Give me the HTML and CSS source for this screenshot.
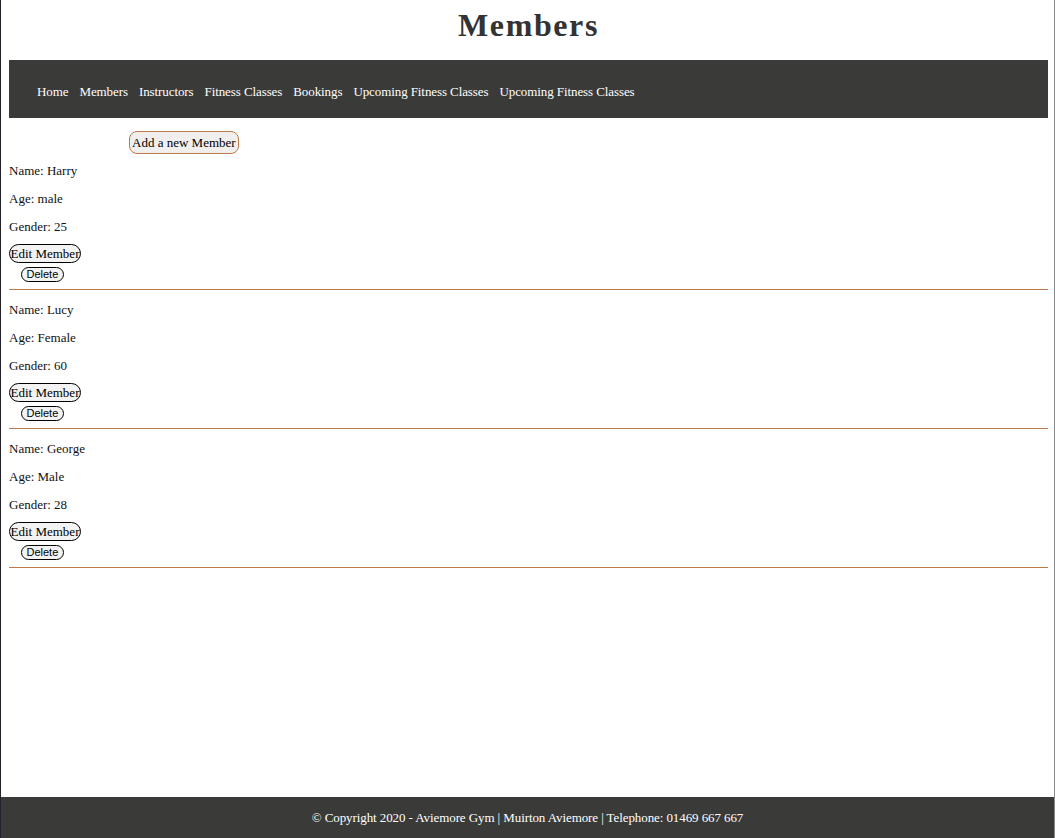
FILE: index.html
```html
<!DOCTYPE html>
<html lang="en">
<head>
<meta charset="utf-8">
<title>Members</title>
<link rel="stylesheet" href="styles.css">
</head>
<body>
<div class="page">
  <div class="content">
    <h1 class="title">Members</h1>
    <nav class="nav">
      <a href="#">Home</a>
      <a href="#">Members</a>
      <a href="#">Instructors</a>
      <a href="#">Fitness Classes</a>
      <a href="#">Bookings</a>
      <a href="#">Upcoming Fitness Classes</a>
      <a href="#">Upcoming Fitness Classes</a>
    </nav>
    <div class="add-wrap"><button class="btn-add">Add a new Member</button></div>
    <div class="members">
      <div class="member">
        <p>Name: Harry</p>
        <p>Age: male</p>
        <p>Gender: 25</p>
        <div class="actions">
          <button class="btn-edit">Edit Member</button>
          <button class="btn-delete">Delete</button>
        </div>
        <hr class="rule">
      </div>
      <div class="member">
        <p>Name: Lucy</p>
        <p>Age: Female</p>
        <p>Gender: 60</p>
        <div class="actions">
          <button class="btn-edit">Edit Member</button>
          <button class="btn-delete">Delete</button>
        </div>
        <hr class="rule">
      </div>
      <div class="member">
        <p>Name: George</p>
        <p>Age: Male</p>
        <p>Gender: 28</p>
        <div class="actions">
          <button class="btn-edit">Edit Member</button>
          <button class="btn-delete">Delete</button>
        </div>
        <hr class="rule">
      </div>
    </div>
  </div>
  <footer class="footer">© Copyright 2020 - Aviemore Gym | Muirton Aviemore | Telephone: 01469 667 667</footer>
</div>
</body>
</html>
```

FILE: styles.css
```css
html, body {
  margin: 0;
  padding: 0;
  background: #ffffff;
}
body {
  font-family: "Liberation Serif", "Times New Roman", serif;
  font-size: 13px;
  color: #111;
}
.page {
  display: flex;
  flex-direction: column;
  min-height: 100vh;
  box-sizing: border-box;
  border-left: 1px solid #23222a;
  border-right: 1px solid #8a8a8a;
}
.content {
  padding: 0 6px 0 8px;
}
.title {
  margin: 0 0 16px;
  padding-top: 7px;
  line-height: 37px;
  font-size: 32px;
  font-weight: bold;
  letter-spacing: 1.6px;
  text-align: center;
  color: #333333;
}
.nav {
  display: flex;
  gap: 11px;
  height: 58px;
  box-sizing: border-box;
  padding: 24px 0 0 28px;
  background: #3a3a38;
}
.nav a {
  color: #ffffff;
  text-decoration: none;
  font-size: 13px;
  letter-spacing: -0.09px;
  line-height: 15px;
}
.add-wrap {
  padding: 13px 0 0 120px;
}
.btn-add {
  font-family: "Liberation Serif", "Times New Roman", serif;
  font-size: 13px;
  line-height: 15px;
  padding: 3px 2px;
  height: 23px;
  border: 1px solid #c07a4c;
  border-radius: 8px;
  background: #f1efee;
  color: #000;
}
.members {
  display: flex;
  flex-direction: column;
}
.member {
  display: flex;
  flex-direction: column;
  padding-top: 12px;
}
.members .member:first-child {
  padding-top: 9px;
}
.member p {
  margin: 0 0 13px;
  line-height: 15px;
}
.member p:nth-of-type(3) {
  margin-bottom: 10px;
}
.actions {
  display: flex;
  flex-direction: column;
  align-items: flex-start;
  gap: 4px;
}
.btn-edit {
  font-family: "Liberation Serif", "Times New Roman", serif;
  font-size: 13px;
  line-height: 15px;
  height: 19px;
  padding: 0 0.5px;
  border: 1px solid #000;
  border-radius: 10px;
  background: #f3f3f3;
  color: #000;
}
.btn-delete {
  margin-left: 12px;
  font-family: "Liberation Sans", Arial, sans-serif;
  font-size: 11px;
  line-height: 13px;
  height: 15px;
  padding: 0 4.5px;
  border: 1px solid #000;
  border-radius: 8px;
  background: #f3f3f3;
  color: #000;
}
.rule {
  margin: 7px 0 0;
  border: 0;
  height: 1px;
  background: #c07a4c;
}
.footer {
  margin-top: auto;
  height: 41px;
  line-height: 41px;
  background: #3a3a38;
  color: #ffffff;
  text-align: center;
  font-size: 13px;
  letter-spacing: -0.09px;
}
```
